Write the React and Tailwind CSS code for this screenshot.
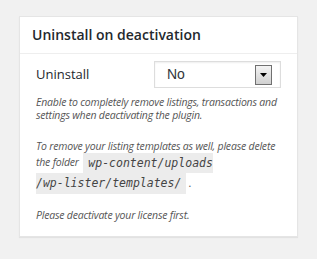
export default function App() {
  return (
    <div className="w-[317px] h-[259px] bg-[#f1f1f1] pt-4 pl-[19px] overflow-hidden">
      <div className="w-[279px] h-[221px] bg-white border border-[#e5e5e5] shadow-[0_1px_1px_rgba(0,0,0,0.06)]">
        <div className="h-[37px] border-b border-[#eeeeee] px-3 flex items-center">
          <h3 className="text-[14px] font-semibold text-[#23282d] font-['Open_Sans',sans-serif] leading-none">
            Uninstall on deactivation
          </h3>
        </div>
        <div className="pl-4 pt-[7px]">
          <div className="flex items-center">
            <div className="w-[118px] text-[13px] text-[#23282d] font-['Open_Sans',sans-serif]">Uninstall</div>
            <div className="w-[127px] h-[27px] border border-[#dddddd] shadow-[inset_0_1px_2px_rgba(0,0,0,0.07)] flex items-center justify-between pl-[12px] pr-[8px]">
              <span className="text-[14px] text-[#32373c] font-['Liberation_Sans',Arial,sans-serif]">No</span>
              <span className="w-[17px] h-[20px] border border-[#707070] bg-gradient-to-b from-[#f4f4f4] to-[#d0d0d0] flex items-center justify-center">
                <svg width="7" height="4" viewBox="0 0 7 4"><path d="M0 0H7L3.5 4Z" fill="#000" /></svg>
              </span>
            </div>
          </div>
          <div className="mt-[7.5px] italic text-[10.5px] tracking-[-0.2px] whitespace-nowrap text-[#555] font-['Open_Sans',sans-serif] leading-[13px]">
            <div>Enable to completely remove listings, transactions and</div>
            <div>settings when deactivating the plugin.</div>
            <div className="mt-[18px]">To remove your listing templates as well, please delete</div>
            <div className="h-[20px] flex items-center">
              <span>the folder&nbsp;</span>
              <code className="ml-[2px] h-[20px] pl-[5px] bg-[#ececec] text-[#444] text-[11.5px] tracking-normal italic font-['DejaVu_Sans_Mono',monospace] leading-[20px]">wp-content/uploads</code>
            </div>
            <div className="h-[21px] flex items-center">
              <code className="h-[21px] pr-[5px] bg-[#ececec] text-[#444] text-[11.5px] tracking-normal italic font-['DejaVu_Sans_Mono',monospace] leading-[21px]">/wp-lister/templates/</code>
              <span>&nbsp;.</span>
            </div>
            <div className="mt-[15.5px]">Please deactivate your license first.</div>
          </div>
        </div>
      </div>
    </div>
  );
}
